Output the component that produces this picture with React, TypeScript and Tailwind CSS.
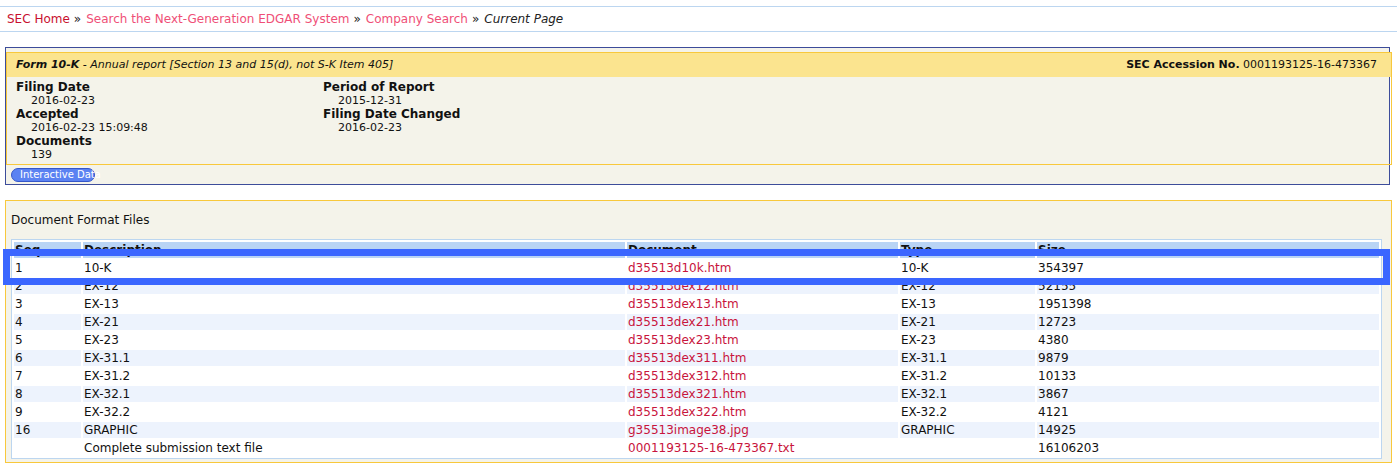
import React from 'react';

interface DocRow {
  seq: string;
  description: string;
  document: string;
  type: string;
  size: string;
}

const rows: DocRow[] = [
  { seq: '1', description: '10-K', document: 'd35513d10k.htm', type: '10-K', size: '354397' },
  { seq: '2', description: 'EX-12', document: 'd35513dex12.htm', type: 'EX-12', size: '52155' },
  { seq: '3', description: 'EX-13', document: 'd35513dex13.htm', type: 'EX-13', size: '1951398' },
  { seq: '4', description: 'EX-21', document: 'd35513dex21.htm', type: 'EX-21', size: '12723' },
  { seq: '5', description: 'EX-23', document: 'd35513dex23.htm', type: 'EX-23', size: '4380' },
  { seq: '6', description: 'EX-31.1', document: 'd35513dex311.htm', type: 'EX-31.1', size: '9879' },
  { seq: '7', description: 'EX-31.2', document: 'd35513dex312.htm', type: 'EX-31.2', size: '10133' },
  { seq: '8', description: 'EX-32.1', document: 'd35513dex321.htm', type: 'EX-32.1', size: '3867' },
  { seq: '9', description: 'EX-32.2', document: 'd35513dex322.htm', type: 'EX-32.2', size: '4121' },
  { seq: '16', description: 'GRAPHIC', document: 'g35513image38.jpg', type: 'GRAPHIC', size: '14925' },
  { seq: '', description: 'Complete submission text file', document: '0001193125-16-473367.txt', type: '', size: '16106203' },
];

function InfoItem({ label, value }: { label: string; value: string }) {
  return (
    <div>
      <div className="font-bold text-[12px] leading-[14px]">{label}</div>
      <div className="text-[11px] leading-[13px] pl-[15px]">{value}</div>
    </div>
  );
}

export default function App() {
  return (
    <div
      className="relative min-h-[469px] bg-white text-[#111] pt-[6px]"
      style={{ fontFamily: '"DejaVu Sans", Verdana, sans-serif' }}
    >
      {/* Breadcrumb */}
      <div className="h-[26px] border-y border-[#bcd6f0] flex items-center px-[7px] text-[12px] whitespace-nowrap">
        <span className="text-[#c8102e]">SEC Home</span>
        <span className="ml-[4px] mr-[5px] text-[#222]">»</span>
        <span className="text-[#ef4f77]">Search the Next-Generation EDGAR System</span>
        <span className="ml-[4px] mr-[5px] text-[#222]">»</span>
        <span className="text-[#ef4f77]">Company Search</span>
        <span className="ml-[4px] mr-[5px] text-[#222]">»</span>
        <span className="italic text-[#222]">Current Page</span>
      </div>

      {/* Form header box */}
      <div className="mt-[15px] ml-[5px] w-[1385px] border border-[#3c4c9a] bg-[#f4f3ea] pt-[4px]">
        <div className="w-[1386px] border border-[#f8c83c]">
          <div className="h-[24px] bg-[#fbe48f] flex items-center justify-between pl-[9px] pr-[14px] text-[11px]">
            <div className="italic">
              <span className="font-bold">Form 10-K</span> - Annual report [Section 13 and 15(d), not S-K Item 405]
            </div>
            <div>
              <span className="font-bold">SEC Accession No.</span> 0001193125-16-473367
            </div>
          </div>
          <div className="h-[87px] pt-[3px] pl-[9px] flex">
            <div className="w-[307px]">
              <InfoItem label="Filing Date" value="2016-02-23" />
              <InfoItem label="Accepted" value="2016-02-23 15:09:48" />
              <InfoItem label="Documents" value="139" />
            </div>
            <div>
              <InfoItem label="Period of Report" value="2015-12-31" />
              <InfoItem label="Filing Date Changed" value="2016-02-23" />
            </div>
          </div>
        </div>
        <div className="h-[19px] pt-[3px] pl-[5px]">
          <div className="w-[84px] h-[14px] rounded-full bg-[#5b82f2] border border-[#3556c8] text-white text-[10px] leading-[12px] pl-[8px] whitespace-nowrap overflow-visible">
            Interactive Data
          </div>
        </div>
      </div>

      {/* Document Format Files */}
      <div className="mt-[15px] ml-[5px] w-[1387px] border border-[#f8c83c] bg-[#f4f3ea] pt-[12px] pl-[5px] pb-[3px]">
        <div className="text-[12px] leading-[14px] mb-[12px]">Document Format Files</div>
        <table className="border-separate border-spacing-[2px] border border-[#bcd6f0] bg-white text-[12px] leading-[16px] w-[1371px] table-fixed">
          <colgroup>
            <col className="w-[67px]" />
            <col className="w-[542px]" />
            <col className="w-[271px]" />
            <col className="w-[135px]" />
            <col className="w-[342px]" />
          </colgroup>
          <thead>
            <tr className="bg-[#b9d4f5] text-left">
              <th className="h-[16px] p-0 pl-[1px] font-bold">Seq</th>
              <th className="h-[16px] p-0 pl-[1px] font-bold">Description</th>
              <th className="h-[16px] p-0 pl-[1px] font-bold">Document</th>
              <th className="h-[16px] p-0 pl-[1px] font-bold">Type</th>
              <th className="h-[16px] p-0 pl-[1px] font-bold">Size</th>
            </tr>
          </thead>
          <tbody>
            {rows.map((r, i) => (
              <tr key={r.document} className={i % 2 === 1 ? 'bg-[#edf3fd]' : 'bg-white'}>
                <td className="h-[16px] p-0 pl-[1px]">{r.seq}</td>
                <td className="h-[16px] p-0 pl-[1px]">{r.description}</td>
                <td className="h-[16px] p-0 pl-[1px] text-[#c8143c]">{r.document}</td>
                <td className="h-[16px] p-0 pl-[1px]">{r.type}</td>
                <td className="h-[16px] p-0 pl-[1px]">{r.size}</td>
              </tr>
            ))}
          </tbody>
        </table>
      </div>

      {/* Highlight overlay on first row */}
      <div className="absolute left-[3px] top-[249px] w-[1387px] h-[36px] border-[7px] border-[#3a66ff] pointer-events-none" />
    </div>
  );
}
